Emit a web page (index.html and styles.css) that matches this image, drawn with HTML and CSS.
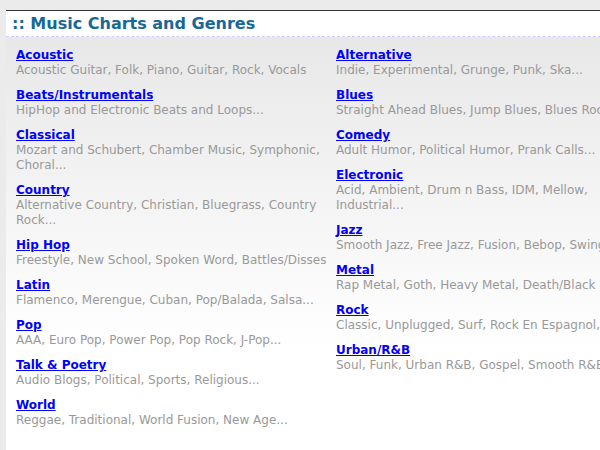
FILE: index.html
```html
<!DOCTYPE html>
<html lang="en">
<head>
    <meta charset="UTF-8">
    <title>Music Charts and Genres</title>
    <link rel="stylesheet" href="styles.css">
</head>
<body>
    <div class="panel">
        <h2 class="panel-title">:: Music Charts and Genres</h2>
        <div class="genres">
            <div class="column">
                <div class="genre">
                    <a href="#">Acoustic</a>
                    <p>Acoustic Guitar, Folk, Piano, Guitar, Rock, Vocals</p>
                </div>
                <div class="genre">
                    <a href="#">Beats/Instrumentals</a>
                    <p>HipHop and Electronic Beats and Loops...</p>
                </div>
                <div class="genre">
                    <a href="#">Classical</a>
                    <p>Mozart and Schubert, Chamber Music, Symphonic, Choral...</p>
                </div>
                <div class="genre">
                    <a href="#">Country</a>
                    <p>Alternative Country, Christian, Bluegrass, Country Rock...</p>
                </div>
                <div class="genre">
                    <a href="#">Hip Hop</a>
                    <p>Freestyle, New School, Spoken Word, Battles/Disses</p>
                </div>
                <div class="genre">
                    <a href="#">Latin</a>
                    <p>Flamenco, Merengue, Cuban, Pop/Balada, Salsa...</p>
                </div>
                <div class="genre">
                    <a href="#">Pop</a>
                    <p>AAA, Euro Pop, Power Pop, Pop Rock, J-Pop...</p>
                </div>
                <div class="genre">
                    <a href="#">Talk &amp; Poetry</a>
                    <p>Audio Blogs, Political, Sports, Religious...</p>
                </div>
                <div class="genre">
                    <a href="#">World</a>
                    <p>Reggae, Traditional, World Fusion, New Age...</p>
                </div>
            </div>
            <div class="column">
                <div class="genre">
                    <a href="#">Alternative</a>
                    <p>Indie, Experimental, Grunge, Punk, Ska...</p>
                </div>
                <div class="genre">
                    <a href="#">Blues</a>
                    <p>Straight Ahead Blues, Jump Blues, Blues Rock...</p>
                </div>
                <div class="genre">
                    <a href="#">Comedy</a>
                    <p>Adult Humor, Political Humor, Prank Calls...</p>
                </div>
                <div class="genre">
                    <a href="#">Electronic</a>
                    <p>Acid, Ambient, Drum n Bass, IDM, Mellow, Industrial...</p>
                </div>
                <div class="genre">
                    <a href="#">Jazz</a>
                    <p>Smooth Jazz, Free Jazz, Fusion, Bebop, Swing...</p>
                </div>
                <div class="genre">
                    <a href="#">Metal</a>
                    <p>Rap Metal, Goth, Heavy Metal, Death/Black Metal...</p>
                </div>
                <div class="genre">
                    <a href="#">Rock</a>
                    <p>Classic, Unplugged, Surf, Rock En Espagnol, Punk...</p>
                </div>
                <div class="genre">
                    <a href="#">Urban/R&amp;B</a>
                    <p>Soul, Funk, Urban R&amp;B, Gospel, Smooth R&amp;B...</p>
                </div>
            </div>
        </div>
    </div>
</body>
</html>
```

FILE: styles.css
```css
html, body {
    height: 100%;
}

body {
    margin: 0;
    padding: 10px 0 0 6px;
    box-sizing: border-box;
    background-color: #ebebeb;
    font-family: "DejaVu Sans", Verdana, sans-serif;
    overflow: hidden;
}

.panel {
    width: 680px;
    height: 100%;
    border-top: 1px solid #333;
    background: linear-gradient(#e6e6e6 0, #ffffff 340px);
}

.panel-title {
    margin: 0;
    height: 26px;
    padding: 3px 0 0 6px;
    box-sizing: border-box;
    background-color: #fff;
    border-bottom: 1px dashed #ccccff;
    color: #186896;
    font-size: 16px;
    font-weight: bold;
}

.genres {
    display: flex;
    padding: 10px 0 0 10px;
}

.column {
    width: 320px;
    flex-shrink: 0;
}

.genre {
    margin-bottom: 9px;
}

.genre a {
    display: block;
    color: #0000ff;
    font-size: 12px;
    font-weight: bold;
    line-height: 16px;
}

.genre p {
    margin: 0;
    width: 312px;
    color: #999;
    font-size: 12px;
    line-height: 15px;
}
```
